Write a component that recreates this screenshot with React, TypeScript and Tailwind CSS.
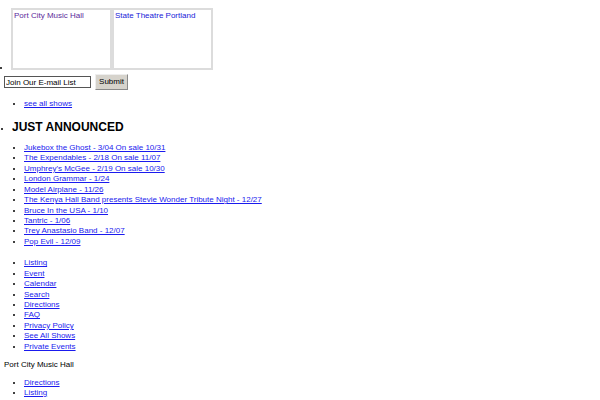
import React from 'react';

const announced = [
  'Jukebox the Ghost - 3/04 On sale 10/31',
  'The Expendables - 2/18 On sale 11/07',
  "Umphrey's McGee - 2/19 On sale 10/30",
  'London Grammar - 1/24',
  'Model Airplane - 11/26',
  'The Kenya Hall Band presents Stevie Wonder Tribute Night - 12/27',
  'Bruce In the USA - 1/10',
  'Tantric - 1/06',
  'Trey Anastasio Band - 12/07',
  'Pop Evil - 12/09',
];

const navLinks = [
  'Listing',
  'Event',
  'Calendar',
  'Search',
  'Directions',
  'FAQ',
  'Privacy Policy',
  'See All Shows',
  'Private Events',
];

const footerLinks = ['Directions', 'Listing'];

const link = 'text-[#1a1aee] underline';

// embedded venue frame (overflow-hidden so the bullet sits on its bottom edge)
const VenueFrame: React.FC<{ name: string; color: string }> = ({ name, color }) => (
  <span className="inline-block w-[101px] h-[62px] overflow-hidden border-2 border-[#dcdcdc] bg-white align-baseline px-[1px] py-[1px] leading-[9px]">
    <span className={color}>{name}</span>
  </span>
);

const LinkList: React.FC<{ items: string[]; className?: string }> = ({ items, className = '' }) => (
  <ul className={`list-disc pl-[20px] ${className}`}>
    {items.map(item => (
      <li key={item}>
        <a href="#" className={link}>{item}</a>
      </li>
    ))}
  </ul>
);

export default function App() {
  return (
    <div className="bg-white text-black px-[4px] text-[8px] leading-[10.44px] font-['Liberation_Sans',Arial,sans-serif]">
      {/* venue frames */}
      <ul className="list-disc pl-[7px] pt-[8px]">
        <li>
          <VenueFrame name="Port City Music Hall" color="text-[#5b2a9a]" />
          <VenueFrame name="State Theatre Portland" color="text-[#2020d8]" />
        </li>
      </ul>

      {/* mailing list */}
      <form className="flex items-center gap-[4px] mt-[1px]" onSubmit={e => e.preventDefault()}>
        <input
          type="text"
          defaultValue="Join Our E-mail List"
          className="w-[87px] h-[12px] border border-[#555] px-[1px] text-[8px] leading-[10px] outline-none"
        />
        <button
          type="submit"
          className="w-[33px] h-[16px] bg-[#d6d3cc] border border-[#8a8a8a] border-t-[#eee] border-l-[#eee] text-[8px] leading-[10px]"
        >
          Submit
        </button>
      </form>

      <LinkList items={['see all shows']} className="mt-[9px]" />

      {/* just announced */}
      <ul className="list-disc pl-[8px] mt-[10px]">
        <li>
          <h2 className="text-[12px] leading-[14px] font-bold">JUST ANNOUNCED</h2>
          <LinkList items={announced} className="mt-[9px] -ml-[8px] pl-[20px]" />
        </li>
      </ul>

      <LinkList items={navLinks} className="mt-[11px]" />

      <p className="mt-[8px]">Port City Music Hall</p>

      <LinkList items={footerLinks} className="mt-[7px]" />
    </div>
  );
}
